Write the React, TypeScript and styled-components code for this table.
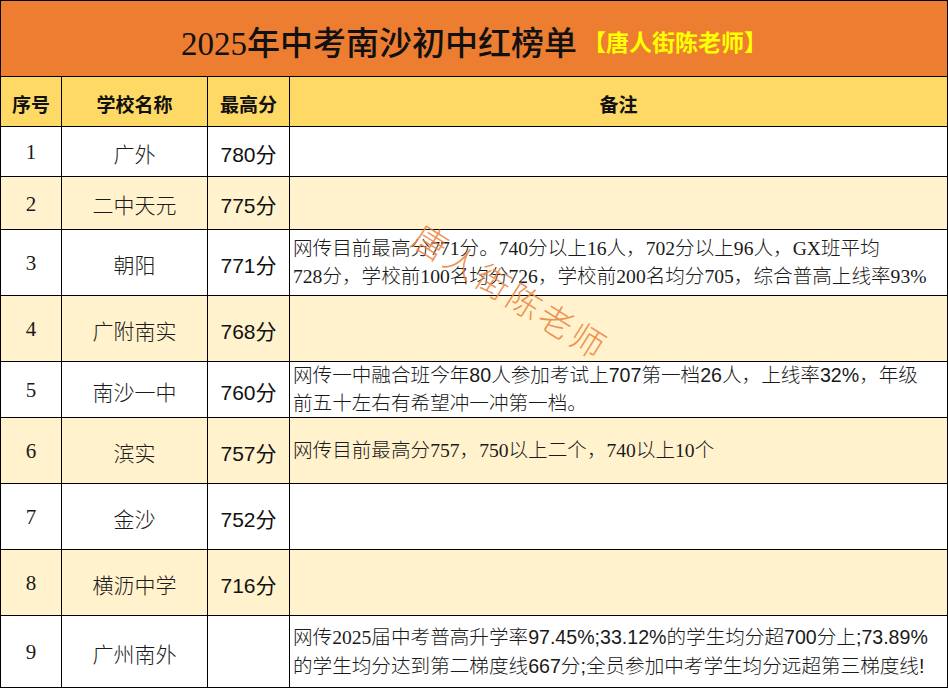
import React from 'react';
import styled, { createGlobalStyle } from 'styled-components';

const Global = createGlobalStyle`
  html, body { margin: 0; padding: 0; background: #fff; }
  #root { width: 948px; height: 688px; }
`;

const SERIF = `"Liberation Serif", "Noto Sans CJK SC", serif`;
const SANS = `"Liberation Sans", "Noto Sans CJK SC", sans-serif`;

const Page = styled.div`
  position: relative;
  width: 948px;
  height: 688px;
  overflow: hidden;
`;

const Table = styled.div`
  display: grid;
  grid-template-columns: 60px 145px 81px 657px;
  grid-template-rows: 75px 49px 49px 52px 65px 65px 55px 65px 65px 65px 71px;
  gap: 1px;
  padding: 1px;
  width: 948px;
  height: 688px;
  box-sizing: border-box;
  background: #000;
`;

const TitleCell = styled.div`
  grid-column: 1 / -1;
  background: #ed7d31;
  display: flex;
  align-items: center;
  justify-content: center;
  padding-top: 5px;
  box-sizing: border-box;
  white-space: nowrap;
`;

const TitleMain = styled.span`
  font-family: ${SERIF};
  font-size: 33px;
  font-weight: 500;
  color: #111;
`;

const TitleTag = styled.span`
  font-family: ${SERIF};
  font-size: 23px;
  font-weight: 700;
  color: #ffff00;
  margin-left: 6px;
`;

const HeadCell = styled.div`
  background: #ffd966;
  display: flex;
  align-items: center;
  justify-content: center;
  padding-top: 3px;
  box-sizing: border-box;
  font-family: ${SERIF};
  font-size: 19px;
  font-weight: 700;
  color: #111;
`;

const Cell = styled.div<{ $alt: boolean }>`
  background: ${(p) => (p.$alt ? '#fff2cc' : '#ffffff')};
  display: flex;
  align-items: center;
  justify-content: center;
  color: #1a1a1a;
  box-sizing: border-box;
  white-space: nowrap;
`;

const NumCell = styled(Cell)`
  font-family: ${SERIF};
  font-size: 21px;
  padding-top: 2px;
`;

const NameCell = styled(Cell)`
  font-family: ${SERIF};
  font-size: 21px;
  font-weight: 300;
  padding-top: 2px;
`;

const ScoreCell = styled(Cell)`
  font-family: ${SANS};
  font-size: 21px;
  font-weight: 400;
  color: #111;
  padding-top: 2px;
`;

const NoteCell = styled(Cell)`
  justify-content: flex-start;
  padding-left: 3px;
  font-family: ${SERIF};
  font-size: 19.6px;
  font-weight: 300;
  line-height: 28px;
`;

const NoteText = styled.div`
  white-space: nowrap;
`;

const Ar = styled.span`
  font-family: ${SANS};
  font-weight: 400;
`;

const Watermark = styled.div`
  position: absolute;
  left: 414px;
  top: 224px;
  font-family: "Noto Sans CJK SC", sans-serif;
  font-weight: 300;
  font-size: 34px;
  line-height: 36px;
  letter-spacing: 3px;
  color: rgba(236, 128, 56, 0.85);
  transform-origin: 18px 18px;
  transform: rotate(32deg);
  white-space: nowrap;
  pointer-events: none;
`;

type Row = { no: number; name: string; score: string; note?: React.ReactNode };

const rows: Row[] = [
  { no: 1, name: '广外', score: '780分' },
  { no: 2, name: '二中天元', score: '775分' },
  {
    no: 3,
    name: '朝阳',
    score: '771分',
    note: (
      <>
        网传目前最高分771分。740分以上16人，702分以上96人，GX班平均
        <br />
        728分，学校前100名均分726，学校前200名均分705，综合普高上线率93%
      </>
    ),
  },
  { no: 4, name: '广附南实', score: '768分' },
  {
    no: 5,
    name: '南沙一中',
    score: '760分',
    note: (
      <>
        网传一中融合班今年<Ar>80</Ar>人参加考试上<Ar>707</Ar>第一档<Ar>26</Ar>人，上线率<Ar>32%</Ar>，年级
        <br />
        前五十左右有希望冲一冲第一档。
      </>
    ),
  },
  {
    no: 6,
    name: '滨实',
    score: '757分',
    note: <>网传目前最高分757，750以上二个，740以上10个</>,
  },
  { no: 7, name: '金沙', score: '752分' },
  { no: 8, name: '横沥中学', score: '716分' },
  {
    no: 9,
    name: '广州南外',
    score: '',
    note: (
      <>
        网传2025届中考普高升学率<Ar>97.45%;33.12%</Ar>的学生均分超<Ar>700</Ar>分上<Ar>;73.89%</Ar>
        <br />
        的学生均分达到第二梯度线<Ar>667</Ar>分<Ar>;</Ar>全员参加中考学生均分远超第三梯度线<Ar>!</Ar>
      </>
    ),
  },
];

export default function App() {
  return (
    <>
      <Global />
      <Page>
        <Table>
          <TitleCell>
            <TitleMain>2025年中考南沙初中红榜单</TitleMain>
            <TitleTag>【唐人街陈老师】</TitleTag>
          </TitleCell>
          <HeadCell>序号</HeadCell>
          <HeadCell>学校名称</HeadCell>
          <HeadCell>最高分</HeadCell>
          <HeadCell>备注</HeadCell>
          {rows.map((r) => {
            const alt = r.no % 2 === 0;
            return (
              <React.Fragment key={r.no}>
                <NumCell $alt={alt}>{r.no}</NumCell>
                <NameCell $alt={alt}>{r.name}</NameCell>
                <ScoreCell $alt={alt}>{r.score}</ScoreCell>
                <NoteCell $alt={alt}>{r.note ? <NoteText>{r.note}</NoteText> : null}</NoteCell>
              </React.Fragment>
            );
          })}
        </Table>
        <Watermark>唐人街陈老师</Watermark>
      </Page>
    </>
  );
}
